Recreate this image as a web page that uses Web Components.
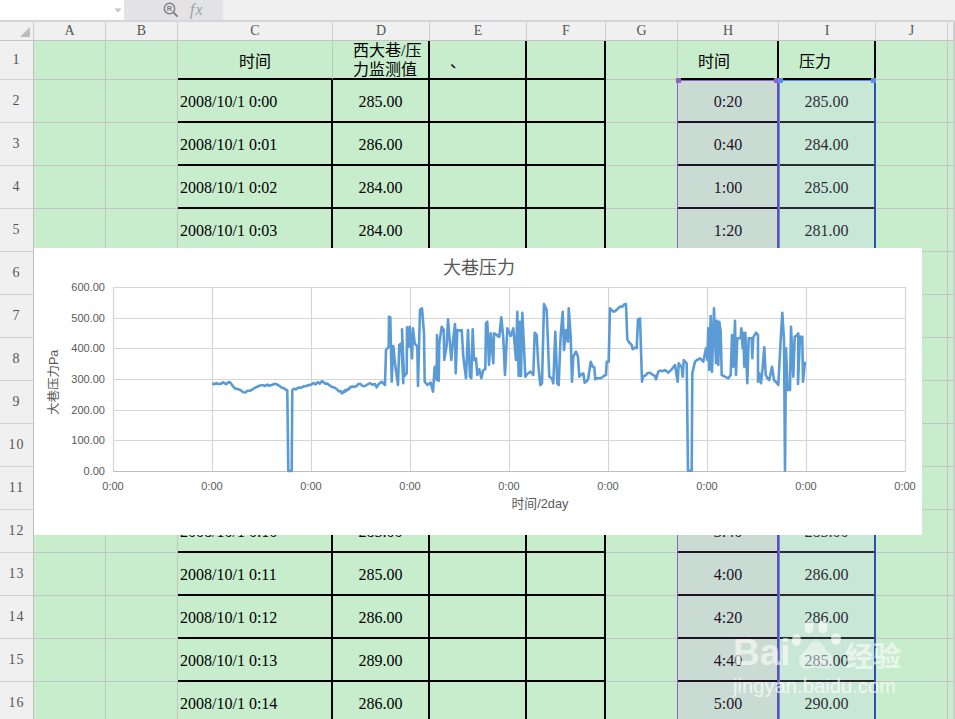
<!DOCTYPE html>
<html lang="zh">
<head>
<meta charset="utf-8">
<title>大巷压力</title>
<style>
    html, body { margin: 0; padding: 0; background: #f0f0f0; }
</style>
</head>
<body>
<xl-app></xl-app>
<script>
// zoomed-in trace of the pressure line, split by where it was measured from
const traceLeft = [[547,415],[565,417],[580,412],[588,418],[596,411],[610,425],[625,433],[640,442],[660,437],[675,428],[685,424],[700,421],[725,420],[735,416],[750,424],[772,436],[775,678],[785,678],[787,435],[810,428],[845,418],[880,411],[900,422],[920,432],[937,445],[945,435],[960,430]];
const traceMid = [[5,340],[15,335],[30,322],[50,318],[55,312],[75,318],[85,312],[105,312],[110,322],[125,305],[135,315],[138,210],[146,200],[147,110],[151,112],[155,305],[160,198],[165,250],[174,315],[178,195],[184,190],[190,310],[186,148],[192,290],[200,280],[201,142],[206,200],[209,140],[216,235],[219,145],[224,190],[232,200],[234,318],[240,90],[246,85],[252,160],[254,305],[262,315],[272,308],[279,335],[284,260],[290,300],[291,165],[296,302],[298,190],[305,140],[311,150],[313,240],[320,195],[324,118],[329,180],[334,240],[340,175],[345,132],[347,280],[352,150],[365,150],[370,230],[378,295],[384,150],[390,290],[394,295],[398,148],[402,240],[408,235],[412,285],[418,268],[424,295],[430,270],[436,268],[438,130],[442,125],[447,255],[452,160],[460,250],[462,160],[478,170],[484,112],[490,175],[495,285],[502,145],[512,168],[520,145],[528,240],[532,95],[536,288],[540,125],[543,288],[547,98],[551,180],[556,290],[562,282],[572,275],[580,285],[584,158],[590,165],[595,255],[601,315],[606,310],[612,72],[620,90],[628,290],[636,295],[640,310],[646,155],[652,310],[656,315],[662,165],[668,95],[672,210],[678,150],[684,185],[686,85],[692,170],[696,305],[700,230],[708,215],[714,230],[718,290],[730,280],[734,308],[745,295],[752,245],[758,260],[763,262],[766,298],[780,295],[798,285],[800,245],[806,245],[810,85],[820,95],[835,85],[858,72]];
const traceRight = [[18,72],[22,178],[35,195],[38,208],[50,205],[54,118],[60,115],[66,305],[70,288],[90,278],[105,288],[108,298],[115,275],[135,270],[145,278],[155,268],[165,255],[173,305],[176,250],[185,262],[188,290],[191,240],[200,250],[204,572],[215,572],[217,280],[225,245],[240,235],[250,245],[258,205],[262,240],[265,145],[268,270],[272,108],[276,275],[282,85],[288,250],[291,122],[295,255],[298,125],[302,155],[305,285],[315,290],[325,295],[332,285],[336,165],[340,260],[345,122],[348,285],[352,175],[362,175],[364,145],[368,205],[370,158],[373,260],[376,158],[382,310],[386,175],[395,175],[397,235],[400,172],[408,158],[414,165],[414,305],[418,280],[423,310],[428,262],[433,202],[437,285],[448,300],[456,260],[462,300],[475,315],[482,180],[487,98],[492,180],[495,572],[498,205],[503,330],[510,330],[513,140],[520,290],[524,170],[535,160],[534,312],[540,170],[547,170],[549,305],[555,245]];

// the real series is noisy on its flat parts, add a small wobble there
function roughen(list) {
    const out = [];
    let flip = 1;
    list.forEach(([x, y], i) => {
        out.push([x, y]);
        const next = list[i + 1];
        if (next && next[0] - x > 10 && Math.abs(next[1] - y) < 40 && y < 570) {
            for (let px = x + 6; px < next[0] - 3; px += 6) {
                const t = (px - x) / (next[0] - x);
                out.push([px, y + (next[1] - y) * t + flip * (px % 3 + 1)]);
                flip = -flip;
            }
        }
    });
    return out;
}

function tracePoints() {
    const toPage = (list, ox, oy) => roughen(list).map(([x, y]) => `${(ox + x / 3).toFixed(1)},${(oy + y / 3).toFixed(1)}`);
    return [...toPage(traceLeft, 30, 245), ...toPage(traceMid, 340, 280), ...toPage(traceRight, 620, 280)].join(" ");
}

class XlFormulaBar extends HTMLElement {
    constructor() {
        super();
        this.attachShadow({ mode: "open" });
        this.shadowRoot.innerHTML = `
            <style>
                :host {
                    display: flex;
                    height: 22px;
                    box-sizing: border-box;
                    border-bottom: 2px solid #d6d6da;
                    background: #f0f0f0;
                }
                .name-box {
                    width: 124px;
                    background: #fff;
                    display: flex;
                    align-items: center;
                    justify-content: flex-end;
                    padding-right: 2px;
                    box-sizing: border-box;
                }
                .tools {
                    width: 99px;
                    background: #e3e3e6;
                    display: flex;
                    align-items: center;
                    gap: 11px;
                    padding-left: 39px;
                    box-sizing: border-box;
                }
                .fx {
                    font: italic 16px "Liberation Serif", serif;
                    color: #a0a0a0;
                    letter-spacing: 1px;
                }
                svg { display: block; }
            </style>
            <div class="name-box">
                <svg width="8" height="5" viewBox="0 0 8 5"><path d="M0.5 0.5H7.5L4 4.5Z" fill="#c4c4c4"/></svg>
            </div>
            <div class="tools">
                <svg width="16" height="16" viewBox="0 0 16 16">
                    <circle cx="6.5" cy="6.5" r="5.2" fill="none" stroke="#808080" stroke-width="1.4"/>
                    <path d="M10.4 10.4L14.6 14.6" stroke="#808080" stroke-width="2"/>
                    <text x="6.5" y="9.2" font-family="Liberation Sans" font-size="7.5" font-weight="700" fill="#808080" text-anchor="middle">R</text>
                </svg>
                <span class="fx">fx</span>
            </div>
        `;
    }
}

class XlCell extends HTMLElement {
    constructor() {
        super();
        this.attachShadow({ mode: "open" });
        this.shadowRoot.innerHTML = `
            <style>
                :host {
                    display: flex;
                    align-items: center;
                    box-sizing: border-box;
                    min-width: 0;
                    overflow: hidden;
                    white-space: nowrap;
                    background: #c7edcc;
                    color: #000;
                    border-right: 1px solid #c2c6c2;
                    border-bottom: 1px solid #c2c6c2;
                    font: 16px "Liberation Serif", "Noto Sans CJK SC", serif;
                }
                :host([data-align="center"]) { justify-content: center; }
                :host([data-align="date"]) { padding-left: 2px; }
                :host([data-align="date"]), :host([data-value]) { padding-top: 2px; }
                :host([data-align="head"]) { padding-left: 20px; }
                :host([data-align="wrap"]) { padding-left: 20px; line-height: 19px; align-items: flex-start; }
                :host([data-right]) { border-right: 2px solid #000; }
                :host([data-bottom]) { border-bottom: 2px solid #000; }
                :host([data-kind="col"]), :host([data-kind="row"]), :host([data-kind="corner"]) {
                    background: #f0f0f0;
                    color: #555;
                    justify-content: center;
                    font: 14px "Liberation Serif", serif;
                    border-right-color: #cfcfcf;
                    border-bottom-color: #c4c4c4;
                }
                :host([data-kind="row"]) { letter-spacing: 1px; border-right-color: #bdbdbd; border-bottom-color: #d2d2d2; }
                :host([data-kind="corner"]) { align-items: flex-end; justify-content: flex-end; padding: 0 3px 3px 0; }
            </style>
            <slot></slot>
        `;
    }
}

// one sheet row below the header, columns A to K
function cellsHtml(rowNo, date, value, time, pressure) {
    return `
        <xl-cell data-kind="row">${rowNo}</xl-cell>
        <xl-cell></xl-cell><xl-cell></xl-cell>
        <xl-cell data-align="date" data-right data-bottom>${date}</xl-cell>
        <xl-cell data-align="center" data-value data-right data-bottom>${value}</xl-cell>
        <xl-cell data-right data-bottom></xl-cell>
        <xl-cell data-right data-bottom></xl-cell>
        <xl-cell></xl-cell>
        <xl-cell data-align="center" data-value data-bottom>${time}</xl-cell>
        <xl-cell data-align="center" data-value data-right data-bottom>${pressure}</xl-cell>
        <xl-cell></xl-cell><xl-cell></xl-cell>`;
}

class XlGrid extends HTMLElement {
    constructor() {
        super();
        this.attachShadow({ mode: "open" });
        const rows = [
            [2, "2008/10/1 0:00", "285.00", "0:20", "285.00"],
            [3, "2008/10/1 0:01", "286.00", "0:40", "284.00"],
            [4, "2008/10/1 0:02", "284.00", "1:00", "285.00"],
            [5, "2008/10/1 0:03", "284.00", "1:20", "281.00"],
            [6, "", "", "", ""], [7, "", "", "", ""], [8, "", "", "", ""],
            [9, "", "", "", ""], [10, "", "", "", ""], [11, "", "", "", ""],
            [12, "2008/10/1 0:10", "285.00", "3:40", "285.00"],
            [13, "2008/10/1 0:11", "285.00", "4:00", "286.00"],
            [14, "2008/10/1 0:12", "286.00", "4:20", "286.00"],
            [15, "2008/10/1 0:13", "289.00", "4:40", "285.00"],
            [16, "2008/10/1 0:14", "286.00", "5:00", "290.00"]
        ];
        const letters = ["A", "B", "C", "D", "E", "F", "G", "H", "I", "J", ""];
        this.shadowRoot.innerHTML = `
            <style>
                :host {
                    display: grid;
                    grid-template-columns: 34px 72px 72px 155px 97px 97px 79px 72px 101px 97px 72px 7px;
                    grid-template-rows: 19px 39px repeat(15, 43px);
                }
            </style>
            <xl-cell data-kind="corner"><svg width="10" height="10" viewBox="0 0 10 10" style="display:block"><path d="M10 0V10H0Z" fill="#bcbcbc"/></svg></xl-cell>
            ${letters.map((l) => `<xl-cell data-kind="col">${l}</xl-cell>`).join("")}
            <xl-cell data-kind="row">1</xl-cell>
            <xl-cell></xl-cell><xl-cell></xl-cell>
            <xl-cell data-align="center" data-bottom>时间</xl-cell>
            <xl-cell data-align="wrap" data-right data-bottom><span>西大巷/压<br>力监测值</span></xl-cell>
            <xl-cell data-align="head" data-right data-bottom>、</xl-cell>
            <xl-cell data-right data-bottom></xl-cell>
            <xl-cell></xl-cell>
            <xl-cell data-align="head" data-right data-bottom>时间</xl-cell>
            <xl-cell data-align="head" data-right data-bottom>压力</xl-cell>
            <xl-cell></xl-cell><xl-cell></xl-cell>
            ${rows.map((r) => cellsHtml(...r)).join("")}
        `;
    }
}

class XlSelection extends HTMLElement {
    constructor() {
        super();
        this.attachShadow({ mode: "open" });
        this.shadowRoot.innerHTML = `
            <style>
                :host {
                    position: absolute;
                    box-sizing: border-box;
                    top: 80px;
                    bottom: 0;
                    left: var(--sel-left);
                    width: var(--sel-width);
                    background: var(--sel-fill);
                    border: solid var(--sel-line);
                    border-width: 1px var(--sel-right-width) 0 var(--sel-left-width);
                    border-right-color: var(--sel-right);
                }
                .handle {
                    position: absolute;
                    width: 5px;
                    height: 5px;
                    top: -3px;
                    background: var(--sel-line);
                }
                .start { left: -2px; }
                .end { right: -2px; }
            </style>
            <div class="handle start"></div>
            <div class="handle end"></div>
        `;
    }
}

class XlChart extends HTMLElement {
    constructor() {
        super();
        this.attachShadow({ mode: "open" });
        const yTicks = [[287.5, "600.00"], [318.5, "500.00"], [348.5, "400.00"], [379.5, "300.00"], [410.5, "200.00"], [440.5, "100.00"], [471.5, "0.00"]];
        const xTicks = [113, 212, 311, 410, 509, 608, 707, 806, 905];
        this.shadowRoot.innerHTML = `
            <style>
                :host {
                    position: absolute;
                    left: 34px;
                    top: 248px;
                    width: 888px;
                    height: 287px;
                    background: #fff;
                }
                svg { display: block; }
                text { font-family: "Liberation Sans", "Noto Sans CJK SC", sans-serif; fill: #595959; }
            </style>
            <svg width="888" height="287" viewBox="34 248 888 287">
                <text x="479" y="274" font-size="18" text-anchor="middle">大巷压力</text>
                ${yTicks.map(([y]) => `<path d="M113 ${y}H905.5" stroke="${y > 471 ? "#bfbfbf" : "#d6d6d6"}" stroke-width="1.2"/>`).join("")}
                ${xTicks.map((x) => `<path d="M${x + 0.5} 287V471" stroke="#d6d6d6" stroke-width="1.2"/>`).join("")}
                ${yTicks.map(([y, label]) => `<text x="105" y="${y + 3.5}" font-size="11" text-anchor="end">${label}</text>`).join("")}
                ${xTicks.map((x) => `<text x="${x}" y="490" font-size="11" text-anchor="middle">0:00</text>`).join("")}
                <text transform="translate(58 415) rotate(-90)" font-size="12.5">大巷压力Pa</text>
                <text x="540" y="508" font-size="12.8" text-anchor="middle">时间/2day</text>
                <polyline points="${tracePoints()}" fill="none" stroke="#5b9bd5" stroke-width="2.6" stroke-linejoin="round"/>
            </svg>
        `;
    }
}

class XlWatermark extends HTMLElement {
    constructor() {
        super();
        this.attachShadow({ mode: "open" });
        this.shadowRoot.innerHTML = `
            <style>
                :host {
                    position: absolute;
                    left: 733px;
                    top: 620px;
                    width: 172px;
                    color: rgba(255, 255, 255, .62);
                    pointer-events: none;
                }
                .logo { display: flex; align-items: flex-end; height: 50px; }
                .bai { font: 700 37px/34px "Liberation Sans", sans-serif; width: 59px; }
                .jy { font: 700 28px/30px "Noto Sans CJK SC", sans-serif; margin-left: 3px; }
                .url { font: 20px/24px "Liberation Sans", sans-serif; margin-top: 4px; letter-spacing: .1px; color: rgba(255, 255, 255, .72); }
                svg { display: block; }
            </style>
            <div class="logo">
                <span class="bai">Bai</span>
                <svg width="50" height="50" viewBox="0 0 50 50" fill="currentColor">
                    <ellipse cx="4.5" cy="20" rx="4.5" ry="6"/>
                    <ellipse cx="17" cy="7" rx="4.5" ry="6.5"/>
                    <ellipse cx="31" cy="7" rx="4.5" ry="6.5"/>
                    <ellipse cx="44" cy="19" rx="5" ry="6"/>
                    <path fill-opacity=".7" d="M24 21C18 21 17 28 12 32C7 36 6 40 8 45C10 50 16 49 24 47C32 49 39 50 41 45C43 40 41 36 36 32C31 28 30 21 24 21Z"/>
                </svg>
                <span class="jy">经验</span>
            </div>
            <div class="url">jingyan.baidu.com</div>
        `;
    }
}

class XlApp extends HTMLElement {
    constructor() {
        super();
        this.attachShadow({ mode: "open" });
        this.shadowRoot.innerHTML = `
            <style>
                :host {
                    display: block;
                    position: relative;
                    width: 955px;
                    height: 719px;
                    overflow: hidden;
                }
                .scroll-edge {
                    position: absolute;
                    right: 0;
                    top: 22px;
                    bottom: 0;
                    width: 2px;
                    background: #cfcfcf;
                }
            </style>
            <xl-formula-bar></xl-formula-bar>
            <xl-grid></xl-grid>
            <xl-selection style="--sel-left:677px;--sel-width:102px;--sel-fill:rgba(212,124,251,.15);--sel-line:#8e62c6;--sel-left-width:1px;--sel-right:#6552a6;--sel-right-width:2px"></xl-selection>
            <xl-selection style="--sel-left:779px;--sel-width:97px;--sel-fill:rgba(209,212,254,.2);--sel-line:#5b8cee;--sel-left-width:1px;--sel-right:#2c52b0;--sel-right-width:2px"></xl-selection>
            <xl-chart></xl-chart>
            <xl-watermark></xl-watermark>
            <div class="scroll-edge"></div>
        `;
    }
}

customElements.define("xl-formula-bar", XlFormulaBar);
customElements.define("xl-cell", XlCell);
customElements.define("xl-grid", XlGrid);
customElements.define("xl-selection", XlSelection);
customElements.define("xl-chart", XlChart);
customElements.define("xl-watermark", XlWatermark);
customElements.define("xl-app", XlApp);
</script>
</body>
</html>
